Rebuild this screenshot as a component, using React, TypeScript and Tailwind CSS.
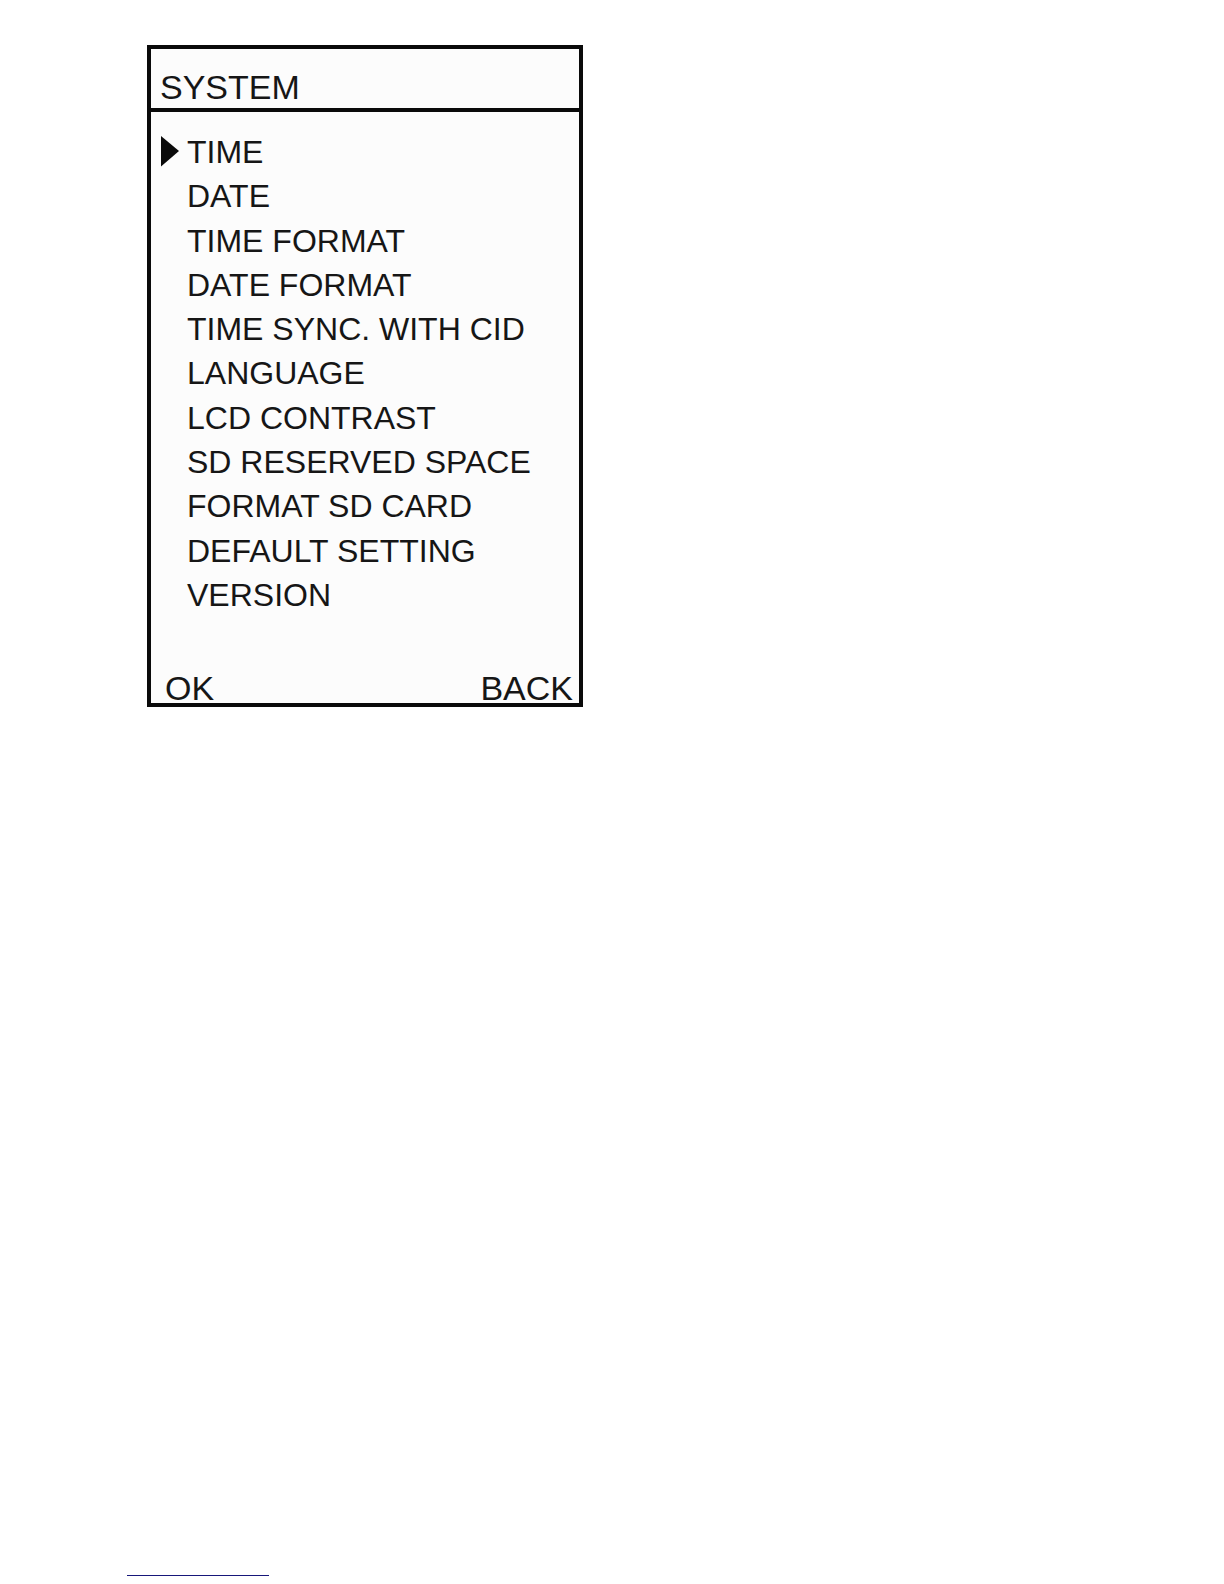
const items = [
  'TIME',
  'DATE',
  'TIME FORMAT',
  'DATE FORMAT',
  'TIME SYNC. WITH CID',
  'LANGUAGE',
  'LCD CONTRAST',
  'SD RESERVED SPACE',
  'FORMAT SD CARD',
  'DEFAULT SETTING',
  'VERSION',
];

function Cursor() {
  return (
    <svg viewBox="0 0 18 32" className="h-8 w-[18px]" fill="#0a0a0a" aria-hidden="true">
      <path d="M0 0 18 15 0 30.5Z" />
    </svg>
  );
}

export default function App() {
  return (
    <div className="flex min-h-screen flex-col bg-white px-[127px] pt-[45px] pb-2 font-['Liberation_Sans',Arial,sans-serif] text-[#161616]">
      <main className="ml-5 w-full max-w-[436px] border-4 border-[#0a0a0a] bg-[#fcfcfc]">
        <header className="border-b-4 border-[#0a0a0a] pt-[18px] pb-px pl-[9px]">
          <h1 className="text-[34px] leading-10">SYSTEM</h1>
        </header>
        <ul className="flex min-h-[505px] flex-col justify-between pt-[18px] pl-[10px] text-[32px] leading-[44px]">
          {items.map((item, i) => (
            <li key={item}>
              <button type="button" className="flex w-full items-center gap-2 text-left whitespace-nowrap">
                <span className="flex w-[18px] shrink-0">{i === 0 && <Cursor />}</span>
                {item}
              </button>
            </li>
          ))}
        </ul>
        <footer className="flex justify-between pt-14 pr-[6px] pl-[14px] text-[34px] leading-[30px]">
          <button type="button">OK</button>
          <button type="button">BACK</button>
        </footer>
      </main>
      <hr className="mt-auto h-px w-[142px] border-0 bg-[#17177a]" />
    </div>
  );
}
